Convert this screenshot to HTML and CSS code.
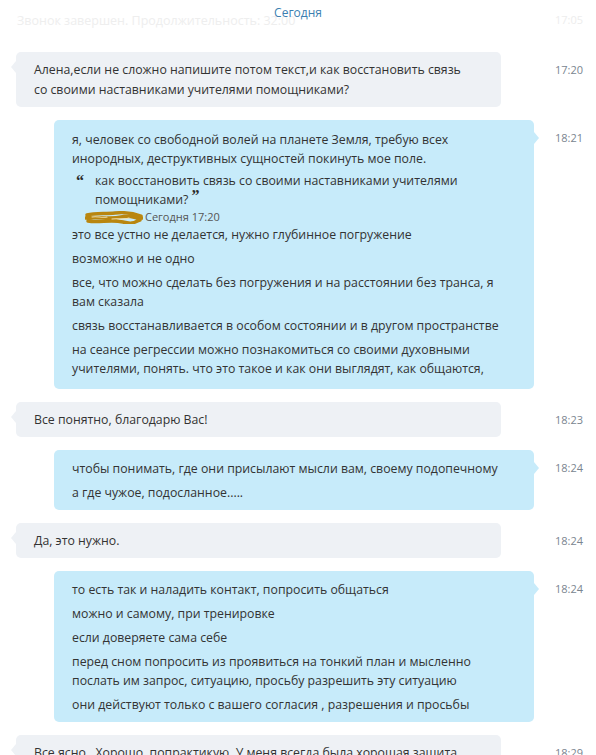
FILE: index.html
```html
<!DOCTYPE html>
<html lang="ru">
<head>
    <meta charset="UTF-8">
    <meta name="viewport" content="width=device-width, initial-scale=1.0">
    <title>Чат</title>
    <link rel="stylesheet" href="styles.css">
</head>
<body>
    <div class="chat">
        <div class="date-bar">Сегодня</div>

        <div class="row call">
            <div class="call-text">Звонок завершен. Продолжительность: 32:00</div>
            <div class="time">17:05</div>
        </div>

        <div class="row">
            <div class="bubble in">
                <p>Алена,если не сложно напишите потом текст,и как восстановить связь со своими наставниками учителями помощниками?</p>
            </div>
            <div class="time">17:20</div>
        </div>

        <div class="row">
            <div class="bubble out first-quote">
                <p>я, человек со свободной волей на планете Земля, требую всех инородных, деструктивных сущностей покинуть мое поле.</p>
                <div class="quote">
                    <span class="quote-mark">&ldquo;</span>
                    <div class="quote-body">
                        <div class="quote-text">как восстановить связь со своими наставниками учителями помощниками? <span class="quote-close">&rdquo;</span></div>
                        <div class="quote-author">
                            <svg class="scribble" width="58" height="13" viewBox="0 0 58 13">
                                <path d="M2 4 C10 2 20 3 30 2 S48 2 56 5 M1 7 C12 5 24 9 36 6 S50 9 57 7 M3 10 C14 12 26 8 38 11 S50 10 55 9" fill="none" stroke="#b9860f" stroke-width="3.4" stroke-linecap="round"/>
                                <path d="M7 6 C12 5 17 7 22 6 M27 8 C33 7 38 9 44 7" fill="none" stroke="#efe0b0" stroke-width="1.2" stroke-linecap="round"/>
                            </svg>
                            <span>Сегодня 17:20</span>
                        </div>
                    </div>
                </div>
                <p>это все устно не делается, нужно глубинное погружение</p>
                <p>возможно и не одно</p>
                <p>все, что можно сделать без погружения и на расстоянии без транса, я вам сказала</p>
                <p>связь восстанавливается в особом состоянии и в другом пространстве</p>
                <p>на сеансе регрессии можно познакомиться со своими духовными учителями, понять. что это такое и как они выглядят, как общаются,</p>
            </div>
            <div class="time">18:21</div>
        </div>

        <div class="row">
            <div class="bubble in">
                <p>Все понятно, благодарю Вас!</p>
            </div>
            <div class="time">18:23</div>
        </div>

        <div class="row">
            <div class="bubble out">
                <p>чтобы понимать, где они присылают мысли вам, своему подопечному</p>
                <p>а где чужое, подосланное.....</p>
            </div>
            <div class="time">18:24</div>
        </div>

        <div class="row">
            <div class="bubble in">
                <p>Да, это нужно.</p>
            </div>
            <div class="time">18:24</div>
        </div>

        <div class="row">
            <div class="bubble out">
                <p>то есть так и наладить контакт, попросить общаться</p>
                <p>можно и самому, при тренировке</p>
                <p>если доверяете сама себе</p>
                <p>перед сном попросить из проявиться на тонкий план и мысленно послать им запрос, ситуацию, просьбу разрешить эту ситуацию</p>
                <p>они действуют только с вашего согласия , разрешения и просьбы</p>
            </div>
            <div class="time">18:24</div>
        </div>

        <div class="row">
            <div class="bubble in">
                <p>Все ясно.&nbsp; Хорошо, попрактикую. У меня всегда была хорошая защита</p>
            </div>
            <div class="time">18:29</div>
        </div>
    </div>
</body>
</html>
```

FILE: styles.css
```css
body {
    margin: 0;
    background: #fff;
    font-family: "Open Sans", "Noto Sans", sans-serif;
    font-size: 12.3px;
    color: #333;
    overflow: hidden;
}
.chat {
    position: relative;
    padding-top: 11px;
    display: flex;
    flex-direction: column;
    gap: 13px;
}
.date-bar {
    position: absolute;
    top: 4px;
    left: 0;
    right: 0;
    text-align: center;
    color: #3c7fb1;
    font-size: 12px;
    line-height: 18px;
}
.row {
    display: flex;
    align-items: flex-start;
}
.call {
    height: 19px;
    margin-bottom: 9px;
}
.call-text {
    margin-left: 17px;
    color: #eeeeee;
    font-size: 12.5px;
    line-height: 19px;
}
.call .time {
    color: #ededed;
    padding-top: 1px;
}
.bubble {
    position: relative;
    box-sizing: border-box;
    border-radius: 5px;
}
.bubble.in {
    margin-left: 16px;
    width: 485px;
    padding: 8px 30px 7px 18px;
    background: #eef1f5;
}
.bubble.out {
    margin-left: 54px;
    width: 484px;
    padding: 9px 30px 8px 18px;
    background: #c7ebfa;
}
.bubble.first-quote {
    padding-top: 10px;
    padding-bottom: 11px;
}
.bubble.in::before {
    content: "";
    position: absolute;
    left: -5px;
    top: 9px;
    border-top: 6px solid transparent;
    border-bottom: 6px solid transparent;
    border-right: 5px solid #eef1f5;
}
.bubble.out::after {
    content: "";
    position: absolute;
    right: -5px;
    top: 12px;
    border-top: 6px solid transparent;
    border-bottom: 6px solid transparent;
    border-left: 5px solid #c7ebfa;
}
.bubble p {
    margin: 0;
    line-height: 19px;
}
.bubble p + p {
    margin-top: 5px;
}
.bubble.in p {
    line-height: 20px;
}
.quote {
    display: flex;
    margin: 3px 0 0 4px;
}
.quote-mark,
.quote-close {
    font-family: "Liberation Serif", serif;
    font-weight: bold;
    font-size: 16px;
    line-height: 12px;
    color: #2a2a2a;
}
.quote-mark {
    width: 19px;
    flex: none;
    line-height: 19px;
}
.quote-close {
    vertical-align: top;
}
.quote-text {
    line-height: 19px;
}
.quote-author {
    display: flex;
    align-items: center;
    gap: 2px;
    margin-left: -10px;
    font-size: 11px;
    line-height: 16px;
    color: #555;
}
.quote + p {
    margin-top: 0;
}
.time {
    margin-left: auto;
    width: 50px;
    padding-right: 13px;
    text-align: right;
    font-size: 11px;
    color: #7a8590;
    padding-top: 10px;
    line-height: 16px;
}
```
